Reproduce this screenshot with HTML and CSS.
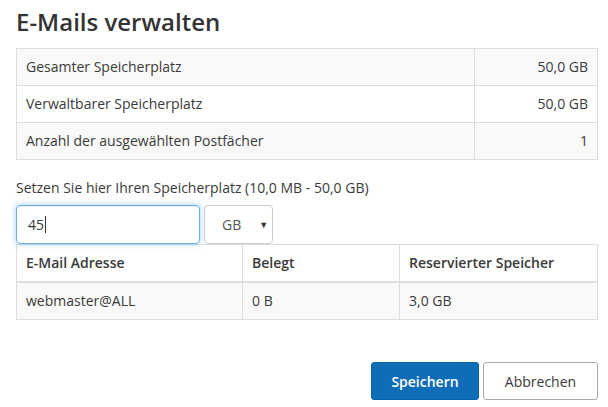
FILE: index.html
```html
<!DOCTYPE html>
<html lang="de">
<head>
<meta charset="utf-8">
<title>E-Mails verwalten</title>
<link rel="stylesheet" href="styles.css">
</head>
<body>
<div class="dialog">
  <h1 class="title">E-Mails verwalten</h1>
  <table class="tbl summary">
    <tbody>
      <tr class="odd"><td>Gesamter Speicherplatz</td><td class="num">50,0 GB</td></tr>
      <tr><td>Verwaltbarer Speicherplatz</td><td class="num">50,0 GB</td></tr>
      <tr class="odd"><td>Anzahl der ausgewählten Postfächer</td><td class="num">1</td></tr>
    </tbody>
  </table>
  <label class="label" for="size">Setzen Sie hier Ihren Speicherplatz (10,0 MB - 50,0 GB)</label>
  <div class="controls">
    <div class="input focus" id="size">45<span class="caret"></span></div>
    <div class="select">GB<span class="arrow">▼</span></div>
  </div>
  <table class="tbl boxes">
    <thead>
      <tr><th class="c1">E-Mail Adresse</th><th class="c2">Belegt</th><th class="c3">Reservierter Speicher</th></tr>
    </thead>
    <tbody>
      <tr class="odd"><td>webmaster@ALL</td><td>0 B</td><td>3,0 GB</td></tr>
    </tbody>
  </table>
  <div class="actions">
    <button class="btn primary">Speichern</button>
    <button class="btn default">Abbrechen</button>
  </div>
</div>
</body>
</html>
```
FILE: styles.css
```css
html, body {
  margin: 0;
  padding: 0;
  background: #fff;
}
body {
  font-family: "Open Sans", "Liberation Sans", sans-serif;
  color: #3a3a3a;
  font-size: 14px;
  line-height: 20px;
}
.dialog {
  width: 582px;
  padding: 0 10px 0 16px;
}
.title {
  font-size: 24px;
  font-weight: 600;
  line-height: 30px;
  margin: 7px 0 11px;
  color: #333;
}
.tbl {
  width: 100%;
  border-collapse: collapse;
  border: 1px solid #ddd;
}
.tbl td, .tbl th {
  border: 1px solid #ddd;
  padding: 8px 9px;
  text-align: left;
}
.tbl tr.odd td { background: #f9f9f9; }
.summary td.num {
  width: 104px;
  text-align: right;
}
.label {
  display: block;
  margin: 18px 0 7px;
  font-size: 14px;
  line-height: 20px;
}
.controls {
  display: flex;
  gap: 4px;
}
.input {
  box-sizing: border-box;
  width: 184px;
  height: 39px;
  border: 1px solid #66afe9;
  border-radius: 4px;
  box-shadow: inset 0 1px 1px rgba(0,0,0,.075), 0 0 6px rgba(102,175,233,.6);
  padding: 9px 11px;
  font-size: 14px;
  display: flex;
  align-items: center;
}
.caret {
  display: inline-block;
  width: 1px;
  height: 17px;
  background: #333;
  margin-left: 1px;
}
.select {
  box-sizing: border-box;
  width: 69px;
  height: 39px;
  border: 1px solid #ccc;
  border-radius: 4px;
  display: flex;
  align-items: center;
  padding-left: 17px;
  font-size: 14px;
  color: #555;
}
.arrow {
  font-size: 9px;
  margin-left: 18px;
  color: #333;
}
.boxes th {
  font-weight: 600;
  border-bottom: 2px solid #ddd;
}
.boxes .c1 { width: 207px; }
.boxes .c2 { width: 138px; }
.actions {
  display: flex;
  justify-content: flex-end;
  gap: 4px;
  margin-top: 42px;
}
.btn {
  font-family: inherit;
  font-size: 14px;
  height: 38px;
  border-radius: 3px;
  padding: 0 12px;
  cursor: pointer;
}
.primary {
  width: 108px;
  background: #0e6db6;
  border: 1px solid #0b62a5;
  color: #fff;
  font-weight: 600;
}
.default {
  width: 115px;
  background: #fff;
  border: 1px solid #aaa;
  color: #3a3a3a;
}
```
